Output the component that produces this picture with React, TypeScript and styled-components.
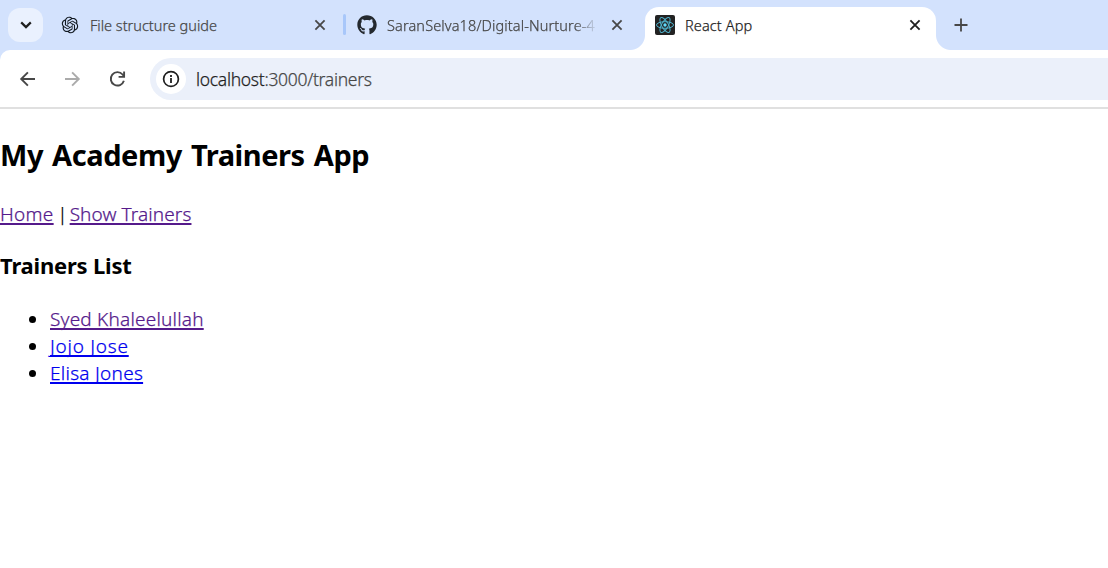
import React from "react";
import styled, { createGlobalStyle } from "styled-components";
import { FaGithub } from "react-icons/fa";
import { RiOpenaiFill } from "react-icons/ri";

const GlobalStyle = createGlobalStyle`
  * { box-sizing: border-box; }
  body {
    margin: 0;
    background: #fff;
    font-family: "Noto Sans", "Open Sans", sans-serif;
    font-weight: 300;
    -webkit-text-stroke: 0.25px currentColor;
    overflow: hidden;
  }
  svg { display: block; flex: none; }
`;

const Window = styled.div`
  height: 568px;
  display: flex;
  flex-direction: column;
  background: #fff;
`;

const TabStrip = styled.div`
  height: 50px;
  flex: none;
  display: flex;
  align-items: flex-start;
  padding-left: 8px;
  background: #d3e2fd;
`;

const TabSearch = styled.button`
  width: 35px;
  height: 34px;
  margin: 8px 7px 0 0;
  padding: 0;
  border: 0;
  border-radius: 12px;
  background: #eaf1fe;
  display: grid;
  place-items: center;
`;

const Tab = styled.div<{ $width: number; $end: number; $active?: boolean }>`
  position: relative;
  width: ${(p) => p.$width}px;
  height: ${(p) => (p.$active ? 43 : 36)}px;
  margin-top: 7px;
  padding: 0 ${(p) => p.$end}px ${(p) => (p.$active ? 7 : 0)}px 10px;
  display: flex;
  align-items: center;
  background: ${(p) => (p.$active ? "#fff" : "transparent")};
  border-radius: 14px 14px 0 0;
  color: ${(p) => (p.$active ? "#1f1f1f" : "#474747")};

  ${(p) =>
    p.$active &&
    `&::before, &::after {
      content: "";
      position: absolute;
      bottom: 0;
      width: 15px;
      height: 15px;
    }
    &::before {
      left: -15px;
      background: radial-gradient(circle at 0 0, transparent 14.5px, #fff 15.5px);
    }
    &::after {
      right: -15px;
      background: radial-gradient(circle at 100% 0, transparent 14.5px, #fff 15.5px);
    }`}
`;

const Favicon = styled.span`
  width: 20px;
  height: 20px;
  margin-right: 10px;
  flex: none;
  display: grid;
  place-items: center;
`;

const TabTitle = styled.span<{ $spacing?: number; $fade?: boolean }>`
  flex: 1;
  min-width: 0;
  overflow: hidden;
  white-space: nowrap;
  font-size: 14.5px;
  line-height: 22px;
  letter-spacing: ${(p) => p.$spacing ?? 0}px;
  margin-right: 15px;
  ${(p) =>
    p.$fade && "mask-image: linear-gradient(to right, #000 188px, transparent 211px);"}
`;

const Divider = styled.span`
  width: 3px;
  height: 21px;
  margin: 14px 1px 0 0;
  border-radius: 2px;
  background: #a8c7fa;
`;

const NewTab = styled.span`
  margin: 18px 0 0 18px;
`;

const Toolbar = styled.div`
  background: #d3e2fd;
  flex: none;
`;

const ToolbarInner = styled.div`
  height: 59px;
  display: flex;
  align-items: center;
  padding: 1px 0 0 19px;
  border-bottom: 2px solid #e0e0e0;
  border-radius: 10px 0 0 0;
  background: #fff;
  gap: 28px;
`;

const Omnibox = styled.div`
  flex: 1;
  height: 42px;
  margin-left: -4px;
  padding-left: 6px;
  display: flex;
  align-items: center;
  border-radius: 21px 0 0 21px;
  background: #ebf0fa;
`;

const SiteInfo = styled.span`
  width: 30px;
  height: 30px;
  margin-right: 10px;
  border-radius: 50%;
  background: #fff;
  display: grid;
  place-items: center;
`;

const Url = styled.span`
  font-size: 17.5px;
  line-height: 24px;
  letter-spacing: -0.3px;
  color: #474747;
`;

const Host = styled.span`
  color: #1f1f1f;
`;

const Page = styled.main`
  color: #000;
  font-size: 19px;
  line-height: 27px;
`;

const Title = styled.h2`
  margin: 26px 0 0;
  font-size: 29px;
  line-height: 40px;
  letter-spacing: -0.45px;
  word-spacing: 2px;
  -webkit-text-stroke: 0;
`;

const Nav = styled.nav`
  margin-top: 26px;
`;

const Separator = styled.span`
  letter-spacing: -1.4px;
`;

const Link = styled.a<{ $visited?: boolean; $spacing?: number }>`
  color: ${(p) => (p.$visited ? "#551a8b" : "#0000ee")};
  letter-spacing: ${(p) => p.$spacing ?? 0}px;
  text-decoration: underline;
  text-decoration-thickness: 2px;
  text-underline-offset: 2px;
  text-decoration-skip-ink: none;
`;

const Subtitle = styled.h3`
  margin: 22px 0 0;
  font-size: 22px;
  line-height: 31px;
  letter-spacing: -0.2px;
  -webkit-text-stroke: 0;
`;

const List = styled.ul`
  margin: 25px 0 0;
  padding: 0 0 0 50px;
  list-style: none;
`;

const Item = styled.li`
  display: flex;
  align-items: center;
  &::before {
    content: "";
    width: 7px;
    height: 7px;
    margin: 0 14px 0 -21px;
    border-radius: 50%;
    background: #000;
  }
`;

const Close = ({ color = "#474747" }: { color?: string }) => (
  <svg width="12" height="12" viewBox="0 0 12 12" stroke={color} strokeWidth="1.8">
    <path d="M1.4 1.4l9.2 9.2M10.6 1.4l-9.2 9.2" />
  </svg>
);

const ReactMark = () => (
  <svg width="20" height="20" viewBox="0 0 20 20">
    <rect width="20" height="20" rx="2" fill="#222" />
    <g fill="none" stroke="#4fb3cd" strokeWidth="1">
      <ellipse cx="10" cy="10" rx="8.5" ry="3.3" />
      <ellipse cx="10" cy="10" rx="8.5" ry="3.3" transform="rotate(60 10 10)" />
      <ellipse cx="10" cy="10" rx="8.5" ry="3.3" transform="rotate(120 10 10)" />
    </g>
    <circle cx="10" cy="10" r="1.7" fill="#61dafb" />
  </svg>
);

const Back = () => (
  <svg width="17" height="17" viewBox="0 0 17 17" fill="none" stroke="#474747" strokeWidth="1.9">
    <path d="M16 8H2.5M8.9 1.3L2.2 8l6.7 6.7" />
  </svg>
);

const Forward = () => (
  <svg width="17" height="17" viewBox="0 0 17 17" fill="none" stroke="#ababab" strokeWidth="1.9">
    <path d="M1 8h13.5M8.1 1.3L14.8 8l-6.7 6.7" />
  </svg>
);

const Reload = () => (
  <svg width="17" height="17" viewBox="0 0 17 17" fill="none" stroke="#474747" strokeWidth="1.9">
    <path d="M14.9 9.8A6.7 6.7 0 1 1 13.6 3.5L15 4.9" />
    <path d="M15.1 .5v5.4H9.6" />
  </svg>
);

const Info = () => (
  <svg width="18" height="18" viewBox="0 0 18 18" fill="none" stroke="#1f1f1f">
    <circle cx="9" cy="9" r="7.4" strokeWidth="1.7" />
    <path d="M9 8v5M9 5v1.9" strokeWidth="1.8" />
  </svg>
);

const trainers = [
  { name: "Syed Khaleelullah", visited: true, spacing: 0.2 },
  { name: "Jojo Jose", visited: false, spacing: 0.75 },
  { name: "Elisa Jones", visited: false, spacing: 0.27 },
];

export default function App() {
  return (
    <Window>
      <GlobalStyle />
      <TabStrip>
        <TabSearch aria-label="Search tabs">
          <svg width="12" height="8" viewBox="0 0 12 8" fill="none" stroke="#1f1f1f" strokeWidth="2.2">
            <path d="M1.2 1.4L6 6.1l4.8-4.7" />
          </svg>
        </TabSearch>
        <Tab $width={293} $end={17}>
          <Favicon>
            <RiOpenaiFill size={20} color="#111820" />
          </Favicon>
          <TabTitle>File structure guide</TabTitle>
          <Close />
        </Tab>
        <Divider />
        <Tab $width={298} $end={22}>
          <Favicon>
            <FaGithub size={20} color="#24292f" />
          </Favicon>
          <TabTitle $spacing={0.12} $fade>
            SaranSelva18/Digital-Nurture-4
          </TabTitle>
          <Close />
        </Tab>
        <Tab $width={291} $end={15} $active>
          <Favicon>
            <ReactMark />
          </Favicon>
          <TabTitle $spacing={0.12}>React App</TabTitle>
          <Close color="#1f1f1f" />
        </Tab>
        <NewTab>
          <svg width="14" height="14" viewBox="0 0 14 14" stroke="#474747" strokeWidth="1.8">
            <path d="M7 .5v13M.5 7h13" />
          </svg>
        </NewTab>
      </TabStrip>
      <Toolbar>
        <ToolbarInner>
          <Back />
          <Forward />
          <Reload />
          <Omnibox>
            <SiteInfo>
              <Info />
            </SiteInfo>
            <Url>
              <Host>localhost</Host>:3000/trainers
            </Url>
          </Omnibox>
        </ToolbarInner>
      </Toolbar>
      <Page>
        <Title>My Academy Trainers App</Title>
        <Nav>
          <Link $visited $spacing={0.3}>
            Home
          </Link>
          <Separator> | </Separator>
          <Link $visited $spacing={0.1}>
            Show Trainers
          </Link>
        </Nav>
        <Subtitle>Trainers List</Subtitle>
        <List>
          {trainers.map((t) => (
            <Item key={t.name}>
              <Link $visited={t.visited} $spacing={t.spacing}>
                {t.name}
              </Link>
            </Item>
          ))}
        </List>
      </Page>
    </Window>
  );
}
